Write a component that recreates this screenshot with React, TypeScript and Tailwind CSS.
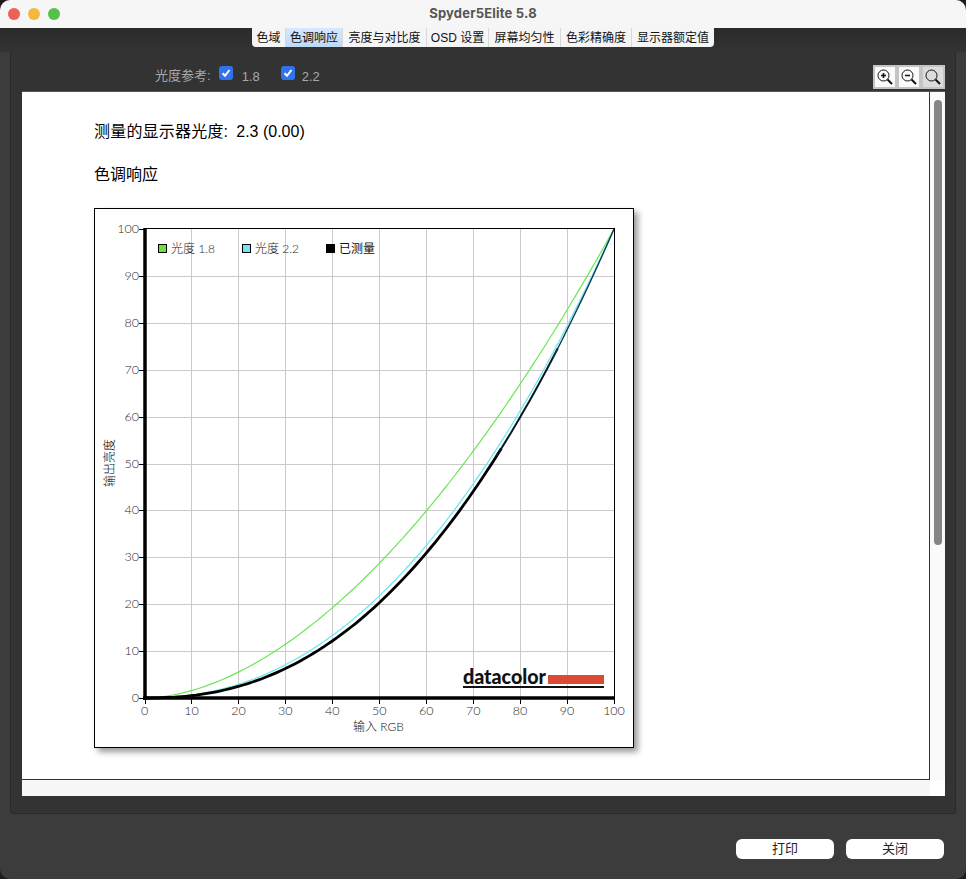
import React from "react";

const FONT = "font-['Liberation_Sans','Noto_Sans_CJK_SC',sans-serif]";
const tabs = [
  { label: "色域", w: "w-[34px]" },
  { label: "色调响应", w: "w-[57px]", active: true },
  { label: "亮度与对比度", w: "w-[84px]" },
  { label: "OSD 设置", w: "w-[62px]" },
  { label: "屏幕均匀性", w: "w-[72px]" },
  { label: "色彩精确度", w: "w-[71px]" },
  { label: "显示器额定值", w: "w-[82px]" },
];

const X0 = 144.5, X1 = 614, Y0 = 698, Y1 = 229;
const px = (v: number) => X0 + ((X1 - X0) * v) / 100;
const py = (v: number) => Y0 - ((Y0 - Y1) * v) / 100;
const curve = (g: number, from = 0, to = 100) => {
  const pts: string[] = [];
  for (let i = from; i <= to; i += 1) {
    pts.push(`${px(i).toFixed(1)},${py(100 * Math.pow(i / 100, g)).toFixed(1)}`);
  }
  return pts.join(" ");
};
const ticks = [0, 10, 20, 30, 40, 50, 60, 70, 80, 90, 100];
const chartFont = "Lato, 'Noto Sans CJK SC', sans-serif";

function Chart() {
  return (
    <svg width="540" height="540" viewBox="94 208 540 540" className="block" fontFamily={chartFont}>
      <rect x="94.5" y="208.5" width="539" height="539" fill="#fff" stroke="#000" />
      {ticks.slice(1, 10).map((t) => (
        <g key={t} stroke="#cbcbcb" strokeWidth="1">
          <line x1={Math.round(px(t)) + 0.5} x2={Math.round(px(t)) + 0.5} y1={Y1} y2={Y0} />
          <line x1={X0} x2={X1} y1={Math.round(py(t)) + 0.5} y2={Math.round(py(t)) + 0.5} />
        </g>
      ))}
      <polyline points={curve(1.8)} fill="none" stroke="#6ae655" strokeWidth="1.2" />
      <polyline points={curve(2.2)} fill="none" stroke="#72e8f0" strokeWidth="1.3" />
      <polyline points={curve(2.3, 0, 76)} fill="none" stroke="#000" strokeWidth="2.8" />
      <polyline points={curve(2.3, 75, 88)} fill="none" stroke="#0a1a24" strokeWidth="2" />
      <polyline points={curve(2.3, 87, 100)} fill="none" stroke="#0b3a52" strokeWidth="1.4" />
      <line x1="144" x2="614.5" y1="228.5" y2="228.5" stroke="#000" />
      <line x1="614.5" x2="614.5" y1="228" y2="698" stroke="#000" />
      <line x1="145" x2="145" y1="228" y2="700" stroke="#000" strokeWidth="3.5" />
      <line x1="143" x2="615" y1="698" y2="698" stroke="#000" strokeWidth="3.5" />
      {ticks.map((t) => (
        <g key={t}>
          <line x1="139" x2="144" y1={Math.round(py(t)) + 0.5} y2={Math.round(py(t)) + 0.5} stroke="#000" />
          <line x1={Math.round(px(t)) + 0.5} x2={Math.round(px(t)) + 0.5} y1="698" y2="704" stroke="#000" />
          <text x="139" y={py(t) + 4} textAnchor="end" fontSize="12.5" fontWeight="300" fill="#2a2a2a">{t}</text>
          <text x={px(t)} y="714.5" textAnchor="middle" fontSize="12.5" fontWeight="300" fill="#2a2a2a">{t}</text>
        </g>
      ))}
      <rect x="158.5" y="244.5" width="8" height="8" fill="#6fe03c" stroke="#000" />
      <text x="171" y="252.5" fontSize="12" fontWeight="300" fill="#222">光度 1.8</text>
      <rect x="242.5" y="244.5" width="8" height="8" fill="#6fe6f0" stroke="#000" />
      <text x="255" y="252.5" fontSize="12" fontWeight="300" fill="#222">光度 2.2</text>
      <rect x="326" y="244" width="9" height="9" fill="#000" />
      <text x="339" y="252.5" fontSize="12" fill="#111">已测量</text>
      <text x="353" y="731" fontSize="12" fontWeight="300" fill="#111">输入 RGB</text>
      <text transform="translate(114 463) rotate(-90)" textAnchor="middle" fontSize="12" fontWeight="300" fill="#000">输出亮度</text>
      <text x="463" y="684" fontSize="21" fontWeight="900" fill="#111" textLength="83" lengthAdjust="spacingAndGlyphs">datacolor</text>
      <rect x="548" y="675" width="56" height="9" fill="#dc4a36" />
      <rect x="463" y="686" width="141" height="2" fill="#111" />
    </svg>
  );
}

function Zoom({ kind }: { kind: "in" | "out" | "fit" }) {
  return (
    <div className={`w-[24px] h-[24px] flex items-center justify-center border-2 border-[#c4c4c4] ${kind === "fit" ? "bg-[#dcdcdc]" : "bg-[#fafafa]"}`}>
      <svg width="18" height="18" viewBox="0 0 18 18" fill="none" stroke="#111">
        <circle cx="7.5" cy="7.5" r="5.5" strokeWidth="1" />
        <line x1="11.5" y1="11.5" x2="16" y2="16" strokeWidth="2" />
        {kind !== "fit" && <line x1="5" x2="10" y1="7.5" y2="7.5" strokeWidth="1.6" />}
        {kind === "in" && <line x1="7.5" x2="7.5" y1="5" y2="10" strokeWidth="1.6" />}
      </svg>
    </div>
  );
}

function Check({ className }: { className: string }) {
  return (
    <div className={`w-[14px] h-[14px] rounded-[3px] bg-[#2f73ee] flex items-center justify-center ${className}`}>
      <svg width="10" height="10" viewBox="0 0 10 10" fill="none" stroke="#fff" strokeWidth="2">
        <path d="M1.5 5.2 L4 7.8 L8.5 2" />
      </svg>
    </div>
  );
}

export default function App() {
  return (
    <div className={`w-full h-screen bg-[#1c1c1e] overflow-hidden ${FONT}`}>
      <div className="w-full h-full rounded-[10px] overflow-hidden bg-[#3c3c3c] flex flex-col">
        {/* Title bar */}
        <div className="relative h-[28px] shrink-0 bg-[#f6f6f6] flex items-center justify-center">
          <div className="absolute left-[8px] top-[8px] flex gap-[8px]">
            <div className="w-[12px] h-[12px] rounded-full bg-[#ee6055]" />
            <div className="w-[12px] h-[12px] rounded-full bg-[#f5b83f]" />
            <div className="w-[12px] h-[12px] rounded-full bg-[#57c04a]" />
          </div>
          <span className="text-[13px] font-bold text-[#555] tracking-[0.2px] font-['Inter',sans-serif]">Spyder5Elite 5.8</span>
        </div>

        {/* Tab strip */}
        <div className="h-[24px] shrink-0 bg-linear-to-b from-[#2b2b2b] to-[#333333] flex justify-center items-start">
          <div className="flex h-[19px] bg-[#f5f5f5] rounded-b-[4px] overflow-hidden">
            {tabs.map((t) => (
              <div
                key={t.label}
                className={`${t.w} h-full flex items-center justify-center text-[12px] text-[#111] border-r border-[#d8d8d8] last:border-r-0 ${t.active ? "bg-linear-to-b from-[#d6e8fc] to-[#bdd9f8]" : ""}`}
              >
                {t.label}
              </div>
            ))}
          </div>
        </div>

        {/* Panel */}
        <div className="mx-[10px] h-[762px] shrink-0 bg-[#333333] border-x border-b border-[#2b2b2b] rounded-b-[3px] pl-[11px] pr-[10px] flex flex-col">
          <div className="h-[39px] shrink-0 flex items-start justify-between">
            <div className="flex items-start pl-[133px] text-[13px] text-[#a8a8a8]">
              <span className="mt-[14px]">光度参考:</span>
              <Check className="mt-[14px] ml-[8px]" />
              <span className="mt-[15px] ml-[9px]">1.8</span>
              <Check className="mt-[14px] ml-[21px]" />
              <span className="mt-[15px] ml-[7px]">2.2</span>
            </div>
            <div className="flex mt-[13px]">
              <Zoom kind="in" />
              <Zoom kind="out" />
              <Zoom kind="fit" />
            </div>
          </div>

          <div className="h-[705px] shrink-0 bg-[#f7f7f7] border-t border-[#555] flex flex-col">
            <div className="h-[688px] shrink-0 flex">
              <div className="flex-1 bg-white border-r border-b border-[#333] pl-[72px] text-black overflow-hidden">
                <p className="mt-[31px] h-[18px] leading-[18px] text-[16px]">
                  <span className="tracking-[0.2px]">测量的显示器光度:</span>
                  <span className="ml-[8px]">2.3 (0.00)</span>
                </p>
                <p className="mt-[25px] h-[18px] leading-[18px] text-[16px]">色调响应</p>
                <div className="mt-[24px] w-[540px] shadow-[4px_4px_6px_rgba(0,0,0,0.4)]">
                  <Chart />
                </div>
              </div>
              <div className="w-[15px] shrink-0 bg-[#fafafa] pl-[4px] pr-[3px] pt-[8px]">
                <div className="h-[445px] rounded-full bg-[#858585]" />
              </div>
            </div>
            <div className="flex-1 flex justify-end">
              <div className="w-[15px] bg-white" />
            </div>
          </div>
        </div>

        {/* Footer */}
        <div className="flex justify-end gap-[12px] pr-[22px] pt-[25px]">
          <button className="w-[98px] h-[20px] rounded-[6px] bg-white text-[13px] text-[#222]">打印</button>
          <button className="w-[98px] h-[20px] rounded-[6px] bg-white text-[13px] text-[#222]">关闭</button>
        </div>
      </div>
    </div>
  );
}
